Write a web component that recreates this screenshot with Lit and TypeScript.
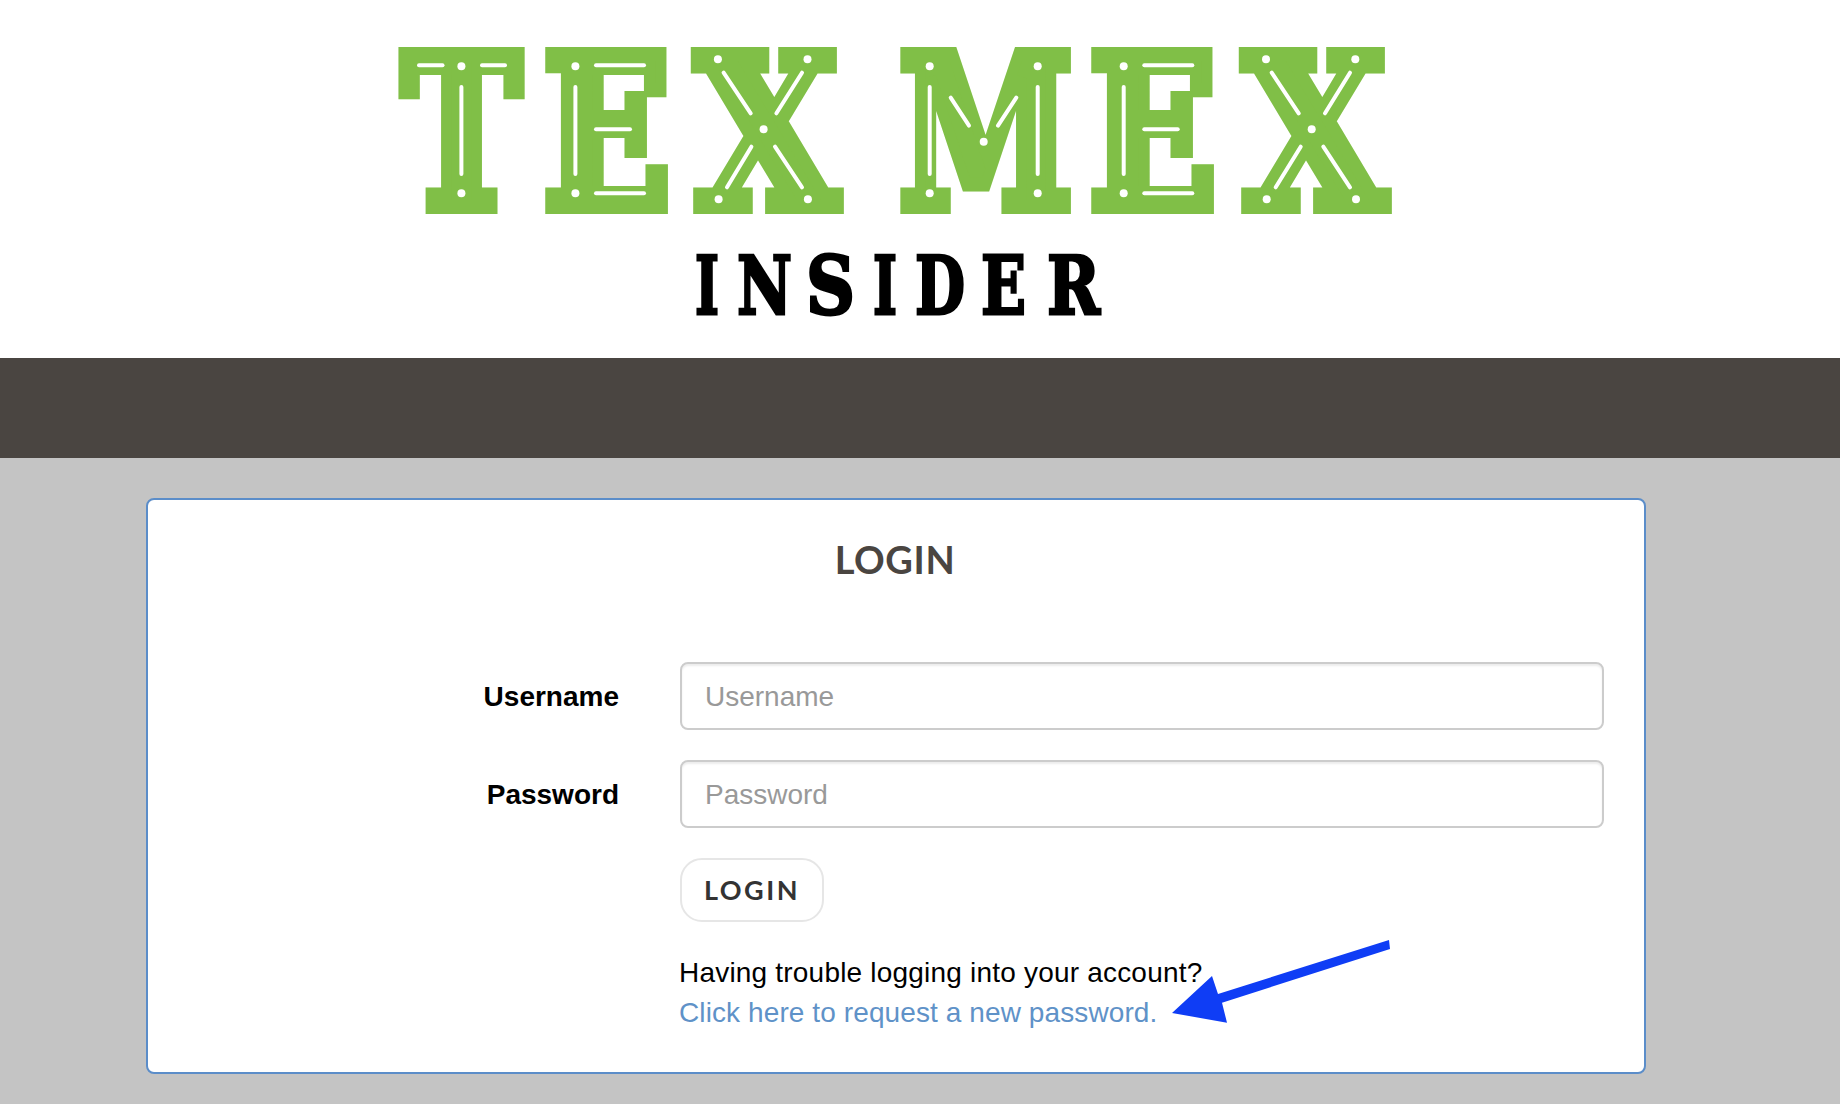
import { LitElement, html, css, svg } from 'lit';
import { customElement } from 'lit/decorators.js';

// x = left edge, w = width each logo letter is squeezed to
const bigLetters = [
  { c: 'T', x: 402, w: 119 },
  { c: 'E', x: 543, w: 128 },
  { c: 'X', x: 696, w: 142 },
  { c: 'M', x: 899, w: 174 },
  { c: 'E', x: 1089, w: 128 },
  { c: 'X', x: 1244, w: 142 },
];

const smallLetters = [
  { c: 'I', x: 695, w: 24 },
  { c: 'N', x: 737, w: 55 },
  { c: 'S', x: 806, w: 49 },
  { c: 'I', x: 873, w: 24 },
  { c: 'D', x: 915, w: 50 },
  { c: 'E', x: 981, w: 45 },
  { c: 'R', x: 1047, w: 53 },
];

const dots = [
  [461.4, 66.3], [461.4, 193.3], [575.4, 66.3], [575.4, 193.3],
  [717.9, 59.3], [807.5, 59.3], [718.6, 199.3], [807.9, 199.3], [763.6, 129.3],
  [929.7, 66.3], [1037.7, 66.3], [929.7, 193.3], [1037.7, 193.3], [983.7, 141.7],
  [1123.7, 66.3], [1123.7, 193.3],
  [1266, 59.3], [1355.3, 59.3], [1266.7, 199.3], [1356, 199.3], [1311.7, 129.3],
];

const slots = [
  [419, 65.3, 442.5, 65.3], [482, 65.3, 505, 65.3], [461.4, 87, 461.4, 174],
  [596, 65.3, 644, 65.3], [596, 129.3, 630, 129.3], [596, 193.3, 644, 193.3], [575.4, 87, 575.4, 174],
  [723.6, 72.7, 750.7, 113.3], [802, 72.7, 776.4, 113.3], [751.4, 146.7, 727, 187.3], [775, 146.7, 802, 187.3],
  [929.7, 87, 929.7, 174], [1037.7, 87, 1037.7, 174], [950.7, 97.7, 969, 125.7], [1016.3, 97.7, 998, 125.7],
  [1144.3, 65.3, 1192.3, 65.3], [1144.3, 129.3, 1177.7, 129.3], [1144.3, 193.3, 1192.3, 193.3], [1123.7, 87, 1123.7, 174],
  [1271.7, 72.7, 1298.7, 113.3], [1350, 72.7, 1325, 113.3], [1300.7, 146.7, 1275.7, 187.3], [1323.3, 146.7, 1350, 187.3],
];

@customElement('app-root')
export class AppRoot extends LitElement {
  static styles = css`
    :host {
      display: block;
      min-height: 1104px;
      background: #c4c4c4;
      font-family: 'Liberation Sans', Arial, sans-serif;
      font-size: 28px;
      color: #000;
    }
    .logo-bar {
      display: block;
      background: #fff;
      height: 358px;
    }
    .logo {
      display: block;
    }
    .big {
      font-family: 'DejaVu Serif', serif;
      font-weight: 700;
      font-size: 210px;
      fill: #80bf47;
      stroke: #80bf47;
      stroke-width: 14;
      stroke-linejoin: miter;
    }
    .small {
      font-family: 'DejaVu Serif', serif;
      font-weight: 700;
      font-size: 81px;
      fill: #000;
      stroke: #000;
      stroke-width: 3;
    }
    .slot {
      stroke: #fff;
      stroke-width: 4;
      stroke-linecap: round;
    }
    .dark-bar {
      height: 100px;
      background: #4a4541;
    }
    .content {
      padding: 40px 194px 30px 146px;
    }
    .card {
      position: relative;
      box-sizing: border-box;
      width: 1500px;
      background: #fff;
      border: 2px solid #5b8dc9;
      border-radius: 8px;
      padding: 40px 40px 39px 0;
    }
    h1 {
      margin: 0 0 83px;
      padding-left: 38px;
      text-align: center;
      font-family: Lato, sans-serif;
      font-weight: 700;
      font-size: 38px;
      letter-spacing: 0.6px;
      line-height: 39px;
      color: #4a4541;
    }
    .form {
      display: grid;
      grid-template-columns: 471px 924px;
      column-gap: 61px;
      row-gap: 30px;
      align-items: center;
    }
    label {
      position: relative;
      top: 1px;
      font-weight: 700;
      text-align: right;
    }
    input {
      box-sizing: border-box;
      width: 100%;
      height: 68px;
      padding: 2px 23px 0;
      border: 2px solid #ccc;
      border-radius: 8px;
      box-shadow: inset 0 2px 2px rgba(0, 0, 0, 0.075);
      font: inherit;
      background: #fff;
      outline: none;
    }
    input::placeholder {
      color: #999;
    }
    .actions {
      grid-column: 2;
    }
    button {
      display: block;
      box-sizing: border-box;
      width: 144px;
      height: 64px;
      padding: 0 0 2px;
      background: #fff;
      border: 2px solid #e6e6e6;
      border-radius: 22px;
      font-family: Lato, sans-serif;
      font-weight: 700;
      font-size: 27px;
      letter-spacing: 2.5px;
      color: #333;
    }
    .help {
      margin-top: 31px;
      margin-left: -1px;
      line-height: 40px;
      letter-spacing: 0.2px;
    }
    a {
      color: #5f92c8;
      text-decoration: none;
      letter-spacing: 0.1px;
    }
    .arrow {
      position: absolute;
      left: 998px;
      top: 434px;
    }
  `;

  // squeeze each logo letter to its width; the text stays real text
  firstUpdated() {
    this.renderRoot.querySelectorAll<SVGTextElement>('text').forEach(el => {
      const x = Number(el.dataset.x);
      const y = Number(el.dataset.y);
      const w = Number(el.dataset.w);
      el.setAttribute('transform', `translate(${x} ${y}) scale(${w / el.getComputedTextLength()} 1)`);
    });
  }

  render() {
    return html`
      <div class="logo-bar">
        <svg class="logo" width="1840" height="358" viewBox="0 0 1840 358" role="img" aria-label="Tex Mex Insider">
          ${bigLetters.map(l => svg`<text class="big" data-x=${l.x} data-y="207" data-w=${l.w}>${l.c}</text>`)}
          ${slots.map(s => svg`<line class="slot" x1=${s[0]} y1=${s[1]} x2=${s[2]} y2=${s[3]}></line>`)}
          ${dots.map(d => svg`<circle cx=${d[0]} cy=${d[1]} r="4" fill="#fff"></circle>`)}
          ${smallLetters.map(l => svg`<text class="small" data-x=${l.x} data-y="314" data-w=${l.w}>${l.c}</text>`)}
        </svg>
      </div>
      <div class="dark-bar"></div>
      <div class="content">
        <div class="card">
          <h1>LOGIN</h1>
          <div class="form">
            <label>Username</label>
            <input type="text" placeholder="Username" />
            <label>Password</label>
            <input type="password" placeholder="Password" />
            <div class="actions">
              <button>LOGIN</button>
              <div class="help">
                Having trouble logging into your account?<br />
                <a href="#">Click here to request a new password.</a>
              </div>
            </div>
          </div>
          <svg class="arrow" width="250" height="100" viewBox="0 0 250 100">
            <polygon fill="#0f3df5" points="243,6 244,15 76,68.7 81,88.7 26,79 66,42 72,60"></polygon>
          </svg>
        </div>
      </div>
    `;
  }
}
